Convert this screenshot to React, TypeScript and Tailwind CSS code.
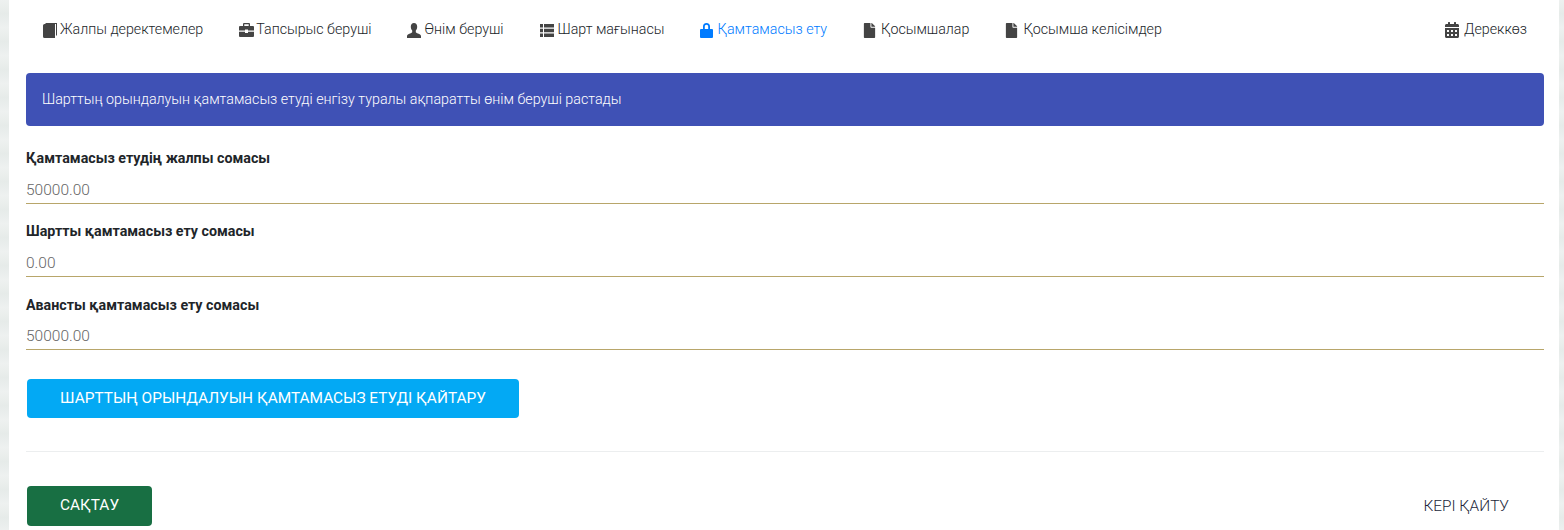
import type { ReactNode } from "react";
import { FaCalendarAlt, FaFile } from "react-icons/fa";

function BookIcon() {
  return (
    <svg viewBox="0 0 14 15" className="h-[15px] w-[14px]" fill="currentColor">
      <path d="M2.5 0H14v12.5h-1V1H2.5z" />
      <path d="M0 2.5A1.5 1.5 0 0 1 1.5 1H12v14H1.5A1.5 1.5 0 0 1 0 13.5z" />
    </svg>
  );
}

function BriefcaseIcon() {
  return (
    <svg viewBox="0 0 15 14" className="h-[14px] w-[15px]" fill="currentColor">
      <path d="M5 0h5a1 1 0 0 1 1 1v2H9.7V1.3H5.3V3H4V1a1 1 0 0 1 1-1z" />
      <path d="M1 3h13a1 1 0 0 1 1 1v3.500H9V6.500H6v1H0V4a1 1 0 0 1 1-1z" />
      <path d="M0 8.800h6V10h3V8.800h6V13a1 1 0 0 1-1 1H1a1 1 0 0 1-1-1z" />
    </svg>
  );
}

function UserIcon() {
  return (
    <svg viewBox="0 0 14 15" className="h-[15px] w-[14px]" fill="currentColor">
      <path d="M7 0c2 0 3.200 1.500 3.200 3.700 0 1.500-.6 3-1.400 3.900v1.300c0 .6 1 1 2.200 1.500 1.500.6 3 1.200 3 2.600v2H0v-2c0-1.400 1.500-2 3-2.600 1.200-.5 2.200-.9 2.200-1.500V7.600c-.8-.9-1.400-2.400-1.400-3.900C3.800 1.500 5 0 7 0z" />
    </svg>
  );
}

function ListIcon() {
  return (
    <svg viewBox="0 0 14 13" className="h-[13px] w-[14px]" fill="currentColor">
      <path d="M0 0h3v3.500H0zM4 0h10v3.500H4zM0 4.750h3v3.500H0zM4 4.750h10v3.500H4zM0 9.500h3V13H0zM4 9.500h10V13H4z" />
    </svg>
  );
}

function LockIcon() {
  return (
    <svg viewBox="0 0 13 15" className="h-[15px] w-[13px]" fill="currentColor">
      <path d="M6.500 0C8.700 0 10 1.400 10 3.500V6h2a1 1 0 0 1 1 1v7a1 1 0 0 1-1 1H1a1 1 0 0 1-1-1V7a1 1 0 0 1 1-1h2V3.500C3 1.400 4.300 0 6.500 0zM4.800 6h3.400V3.500c0-1.100-.6-1.800-1.700-1.800s-1.700.7-1.700 1.800z" />
    </svg>
  );
}

function NavItem({ icon, label, active, className }: { icon: ReactNode; label: string; active?: boolean; className?: string }) {
  return (
    <a className={`flex items-center text-[14.25px] font-light ${active ? "text-[#007bff]" : "text-[#212529]"} ${className ?? ""}`}>
      <span className={`flex items-center ${active ? "text-[#007bff]" : "text-[#444]"}`}>{icon}</span>
      {label}
    </a>
  );
}

function Field({ label, value, className, inputClass }: { label: string; value: string; className?: string; inputClass?: string }) {
  return (
    <div className={className}>
      <div className="text-[14.25px] leading-5 font-bold text-[#212529]">{label}</div>
      <div className={`h-[25px] border-b border-[#b8a66a] text-[15.5px] leading-[23px] font-light text-[#666] ${inputClass ?? "mt-[11px]"}`}>
        {value}
      </div>
    </div>
  );
}

export default function App() {
  return (
    <div className="flex h-[530px] w-full overflow-hidden bg-white font-['Roboto',sans-serif]">
      <div className="w-[9px] shrink-0 bg-[repeating-linear-gradient(180deg,#eef1f0_0px,#e6ebe9_14px,#eef1f0_28px)]" />
      <div className="min-w-0 flex-1 pl-[17px] pr-[15px]">
        <nav className="flex h-[60px] items-center pl-[17px] pr-[17px]">
          <NavItem className="gap-[3px]" icon={<BookIcon />} label="Жалпы деректемелер" />
          <NavItem className="ml-[36px] gap-[2px]" icon={<BriefcaseIcon />} label="Тапсырыс беруші" />
          <NavItem className="ml-[36px] gap-[3px]" icon={<UserIcon />} label="Өнім беруші" />
          <NavItem className="ml-[36px] gap-[4px]" icon={<ListIcon />} label="Шарт мағынасы" />
          <NavItem className="ml-[36px] gap-[4px]" active icon={<LockIcon />} label="Қамтамасыз ету" />
          <NavItem className="ml-[35px] gap-[4px]" icon={<FaFile size={15} />} label="Қосымшалар" />
          <NavItem className="ml-[35px] gap-[4px]" icon={<FaFile size={15} />} label="Қосымша келісімдер" />
          <NavItem className="ml-auto gap-[4px]" icon={<FaCalendarAlt size={16} />} label="Дереккөз" />
        </nav>

        <div className="mt-[13px] flex h-[53px] items-center rounded bg-[#3f51b5] px-4 text-[14.27px] font-light text-white">
          Шарттың орындалуын қамтамасыз етуді енгізу туралы ақпаратты өнім беруші растады
        </div>

        <Field className="mt-[22px]" label="Қамтамасыз етудің жалпы сомасы" value="50000.00" />
        <Field className="mt-[17px]" label="Шартты қамтамасыз ету сомасы" value="0.00" />
        <Field className="mt-[18px]" inputClass="mt-[10px]" label="Авансты қамтамасыз ету сомасы" value="50000.00" />

        <button className="mt-[29px] ml-px flex h-[39px] w-[492px] items-center justify-center rounded bg-[#03a9f4] text-[15.4px] font-normal text-white">
          ШАРТТЫҢ ОРЫНДАЛУЫН ҚАМТАМАСЫЗ ЕТУДІ ҚАЙТАРУ
        </button>

        <div className="mt-[33px] border-t border-[#eceeef]" />

        <div className="mt-[34px] flex items-center justify-between">
          <button className="ml-px flex h-10 w-[125px] items-center justify-center rounded bg-[#186f43] text-[15.4px] font-normal text-white">
            САҚТАУ
          </button>
          <button className="mt-[2px] mr-[35px] text-[15.4px] font-light text-[#1a1f3a]">КЕРІ ҚАЙТУ</button>
        </div>
      </div>
      <div className="w-[5px] shrink-0 bg-[repeating-linear-gradient(180deg,#eef1f0_0px,#e6ebe9_14px,#eef1f0_28px)]" />
    </div>
  );
}
